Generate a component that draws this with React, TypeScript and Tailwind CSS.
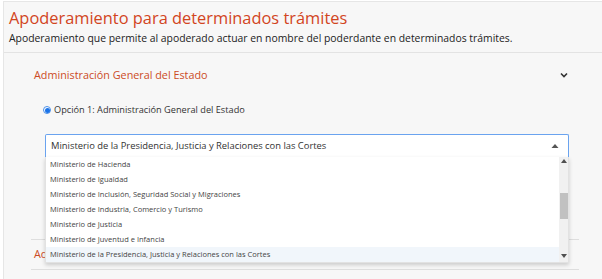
import React from "react";

const items = [
  "Ministerio de Hacienda",
  "Ministerio de Igualdad",
  "Ministerio de Inclusión, Seguridad Social y Migraciones",
  "Ministerio de Industria, Comercio y Turismo",
  "Ministerio de Justicia",
  "Ministerio de Juventud e Infancia",
  "Ministerio de la Presidencia, Justicia y Relaciones con las Cortes",
];

export default function App() {
  return (
    <div className="w-[602px] h-[279px] overflow-hidden bg-white font-['Open_Sans',sans-serif]">
      <div className="ml-[3px] mt-[1px] h-[278px] border-l border-t border-[#e6e6e6] bg-[#f7f7f7]">
        <div className="pl-[5px] pt-[5px] h-[51px] border-b border-[#e3e3e3]">
          <h1 className="text-[16.4px] leading-[22px] text-[#d2451e]">Apoderamiento para determinados trámites</h1>
          <p className="mt-[1px] text-[10.4px] leading-[16px] text-[#222]">
            Apoderamiento que permite al apoderado actuar en nombre del poderdante en determinados trámites.
          </p>
        </div>

        <div className="ml-[27px] mr-[23px]">
          <div className="border-b border-[#dedede] pb-[82px]">
            <div className="flex items-center justify-between h-[44px] pl-[3px] pr-[10px]">
              <span className="text-[10.8px] text-[#cc4b25]">Administración General del Estado</span>
              <svg width="10" height="10" viewBox="0 0 10 10" className="text-[#333]">
                <path d="M2 3.5 L5 6.5 L8 3.5" fill="none" stroke="currentColor" strokeWidth="1.6" />
              </svg>
            </div>

            <label className="flex items-center gap-[3px] ml-[12px] mt-[6px] h-[14px] text-[9.2px] text-[#333]">
              <span className="w-[8px] h-[8px] rounded-full border border-[#4a8fe8] flex items-center justify-center bg-white">
                <span className="w-[5px] h-[5px] rounded-full bg-[#1a73e8]" />
              </span>
              Opción 1: Administración General del Estado
            </label>

            <div className="relative ml-[14px] mr-[10px] mt-[17px]">
              <div className="flex items-center justify-between h-[23px] bg-white border border-b-0 border-[#6aa3ef] rounded-t-[2px] pl-[5px] pr-[9px]">
                <span className="text-[9.4px] text-[#333]">
                  Ministerio de la Presidencia, Justicia y Relaciones con las Cortes
                </span>
                <svg width="8" height="6" viewBox="0 0 8 6">
                  <path d="M0.5 5 L4 1 L7.5 5 Z" fill="#555" />
                </svg>
              </div>

              <div className="absolute left-0 right-0 top-[23px] z-10 h-[106px] bg-white shadow-[0_2px_4px_rgba(0,0,0,0.18)] border border-t-0 border-[#e2e2e2] flex">
                <ul className="flex-1">
                  {items.map((it, i) => (
                    <li
                      key={it}
                      className={`h-[15px] pl-[4px] flex items-center text-[7.5px] text-[#444] ${
                        i === items.length - 1 ? "bg-[#f1f6fb]" : ""
                      }`}
                    >
                      {it}
                    </li>
                  ))}
                </ul>
                <div className="w-[9px] bg-[#f1f1f1] flex flex-col items-center pt-[2px] pb-[4px]">
                  <svg width="6" height="4" viewBox="0 0 6 4">
                    <path d="M0 4 L3 0 L6 4 Z" fill="#505050" />
                  </svg>
                  <div className="w-[8px] h-[26px] bg-[#c1c1c1] mt-[30px]" />
                  <div className="flex-1" />
                  <svg width="6" height="4" viewBox="0 0 6 4">
                    <path d="M0 0 L3 4 L6 0 Z" fill="#505050" />
                  </svg>
                </div>
              </div>
            </div>
          </div>

          <div className="border-b border-[#dedede] h-[30px] flex items-center pl-[3px]">
            <span className="text-[10.8px] text-[#cc4b25]">Administración de las Comunidades Autónomas</span>
          </div>
        </div>
      </div>
    </div>
  );
}
